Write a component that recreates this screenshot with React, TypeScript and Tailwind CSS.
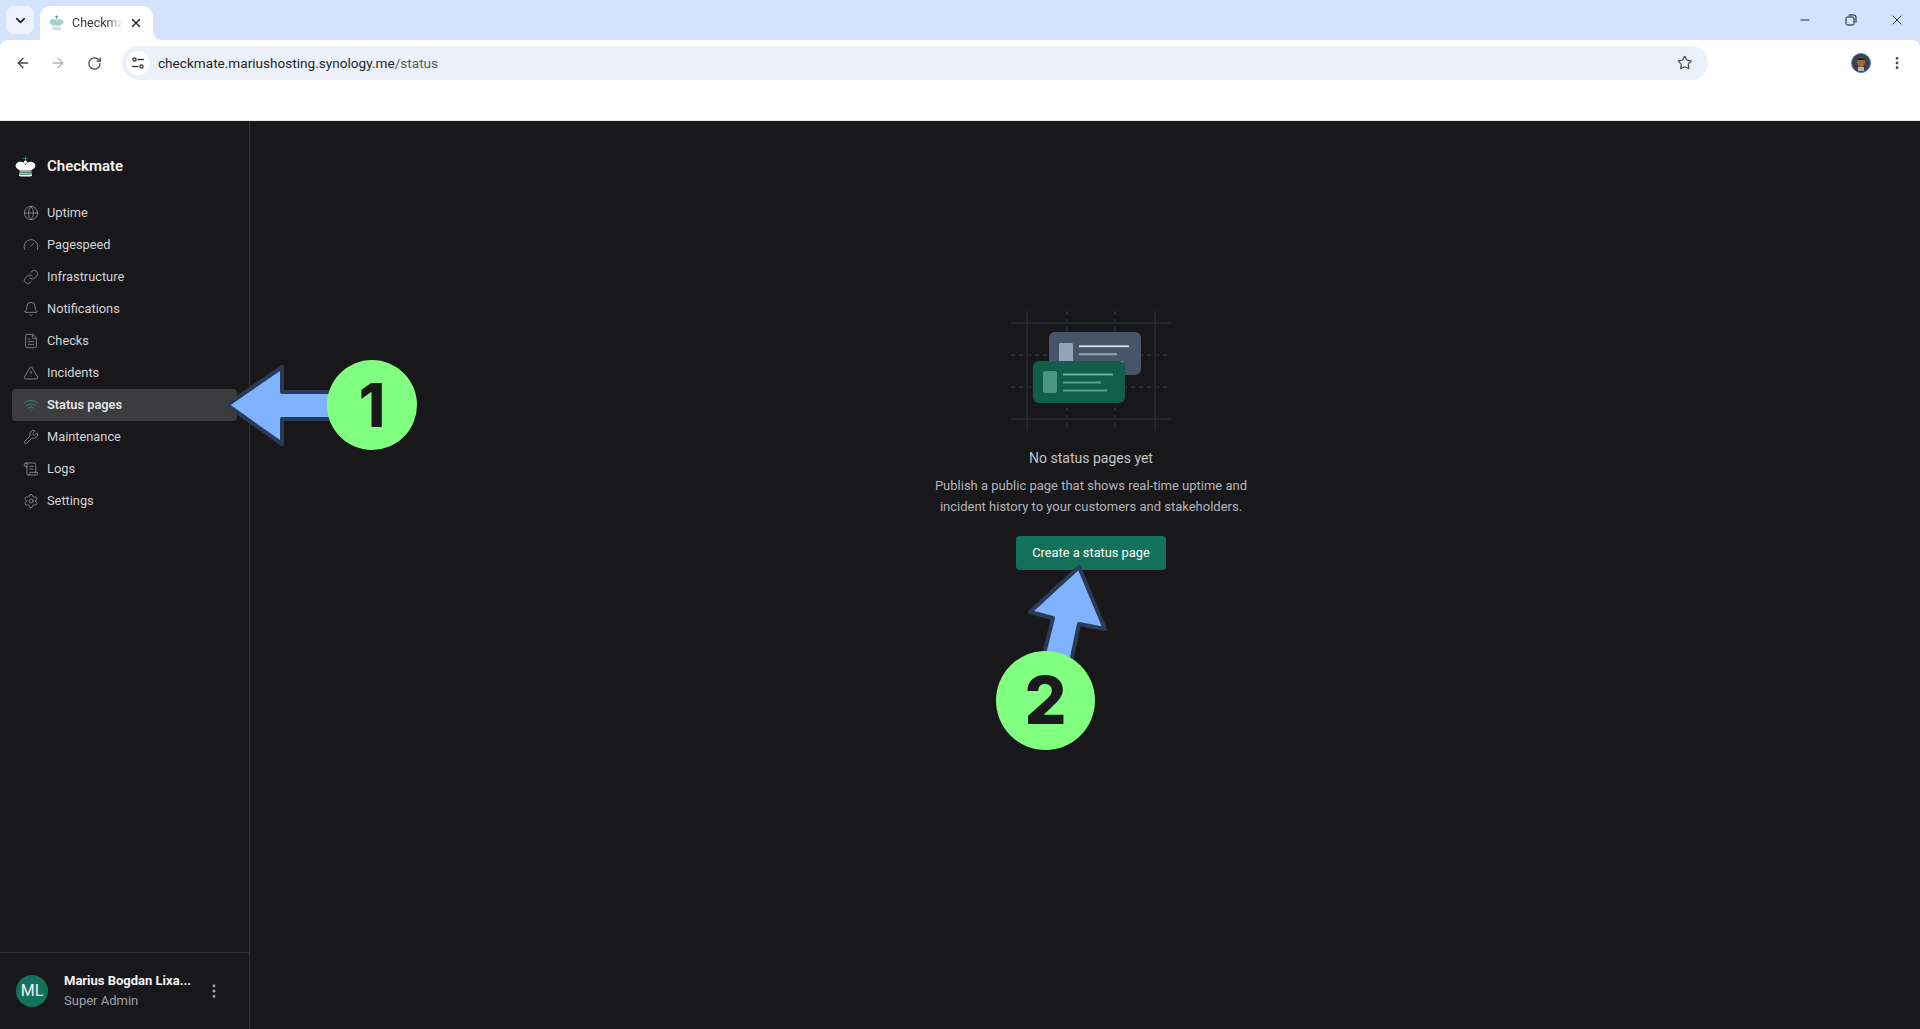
import React from "react";
import { Globe, Link, Bell, FileText, TriangleAlert, Wifi, Wrench, ScrollText, Settings, ArrowLeft, ArrowRight, RotateCw, ChevronDown, X, Star, EllipsisVertical, Minus } from "lucide-react";

const Gauge = (p: { className?: string }) => (
  <svg viewBox="0 0 24 24" fill="none" stroke="currentColor" strokeWidth={1.1} strokeLinecap="round" className={p.className}>
    <path d="M2.6 19a10.5 10.5 0 0 1 9.4-15 10.5 10.5 0 0 1 9.4 15" />
    <path d="M12 13.5l4.5-4.5" />
  </svg>
);

const Crown = ({ className, tab }: { className?: string; tab?: boolean }) => {
  const fill = tab ? "#a9d3c8" : "#ffffff";
  const line = tab ? "#ffffff" : "#13715b";
  return (
    <svg viewBox="0 0 22 22" className={className}>
      <path d="M11 0.5v5M8.6 2.6h4.8" stroke="#1b8a70" strokeWidth="1.1" fill="none" />
      <path d="M11 9.5c1-2.6 3.6-3.8 6-3.4 3 .5 4.8 2.6 4.3 4.8-.4 1.7-3 3.2-4.5 4.2H5.2C3.7 14.100 1.100 12.600.7 10.900.2 8.700 2 6.600 5 6.100c2.400-.4 5 .8 6 3.400z" fill={fill} />
      <circle cx="11" cy="6.500" r="1.700" fill={fill} />
      <path d="M5 15.400h12l.3 2H4.700z" fill={fill} />
      <path d="M4.600 18.200h12.800l.4 2.800c-1.800.8-11.800.8-13.600 0z" fill={fill} />
      <path d="M5 16.600h12M5 19.200h12" stroke={line} strokeWidth=".9" />
    </svg>
  );
};

const items = [
  { label: "Uptime", Icon: Globe },
  { label: "Pagespeed", Icon: Gauge },
  { label: "Infrastructure", Icon: Link },
  { label: "Notifications", Icon: Bell },
  { label: "Checks", Icon: FileText },
  { label: "Incidents", Icon: TriangleAlert },
  { label: "Status pages", Icon: Wifi, active: true },
  { label: "Maintenance", Icon: Wrench },
  { label: "Logs", Icon: ScrollText },
  { label: "Settings", Icon: Settings },
];

function Illustration() {
  const line = "#282c33";
  return (
    <svg width="160" height="120" viewBox="0 0 160 120" fill="none" className="block">
      <path d="M0 12H160M0 108H160M16 0V120M144 0V120" stroke={line} strokeWidth="1.5" />
      <path d="M0 44H160M0 76H160M56 0V120M104 0V120" stroke={line} strokeWidth="1.5" strokeDasharray="4 4" />
      <rect x="38" y="21" width="92" height="43" rx="6" fill="#475569" />
      <rect x="48" y="32" width="14" height="24" rx="1.5" fill="#94a3b8" />
      <path d="M68 35.2H118" stroke="#cbd5e1" strokeWidth="2" />
      <path d="M68 43.2H106" stroke="#94a3b8" strokeWidth="2" />
      <path d="M68 51.2H112" stroke="#94a3b8" strokeWidth="2" />
      <rect x="22" y="50" width="92" height="42" rx="6" fill="#115e4b" />
      <rect x="32" y="60" width="14" height="22" rx="2" fill="#4d9580" />
      <path d="M52 63.4H102" stroke="#6fae9b" strokeWidth="2" />
      <path d="M52 71.4H90" stroke="#5fa08c" strokeWidth="2" />
      <path d="M52 79.4H96" stroke="#5fa08c" strokeWidth="2" />
    </svg>
  );
}

export default function App() {
  return (
    <div className="relative h-[1029px] w-[1920px] overflow-hidden flex flex-col bg-[#18181b] font-['Roboto','Liberation_Sans',sans-serif]">
      {/* browser chrome */}
      <div className="bg-[#d3e3fd] shrink-0">
        <div className="h-10 flex items-end pl-[6px] pr-0">
          <div className="w-[28px] h-[28px] mb-[6px] rounded-lg bg-[#edf2fc] flex items-center justify-center text-[#1f1f1f]">
            <ChevronDown size={15} strokeWidth={2.6} />
          </div>
          <div className="relative ml-[6px] w-[113px] h-[34px] bg-white rounded-t-[10px] flex items-center pl-[9px] text-[#3c3c3c]">
            <Crown className="w-[15px] h-[15px] mb-[2px]" tab />
            <span className="ml-[8px] w-[50px] h-[16px] whitespace-nowrap text-[12.500px] leading-[16px] text-[#3a3a3a] [mask-image:linear-gradient(90deg,#000_70%,transparent)]">Checkma</span>
            <X size={14} strokeWidth={2.4} className="ml-[7px] text-[#222]" />
            <svg width="12" height="10" viewBox="0 0 12 10" className="absolute right-[-12px] bottom-0"><path d="M0 0v10h12C5 10 0 8 0 0z" fill="#fff" /></svg>
          </div>
          <div className="flex-1" />
          <div className="self-start h-10 flex items-center text-[#111]">
            <div className="w-[46px] flex justify-center"><Minus size={14} strokeWidth={1.5} /></div>
            <div className="w-[46px] flex justify-center">
              <svg width="12" height="12" viewBox="0 0 12 12" fill="none" stroke="currentColor" strokeWidth="1"><rect x="1" y="3" width="8" height="8" rx="1.5" /><path d="M3.500 1h5.500a2 2 0 0 1 2 2v5.500" /></svg>
            </div>
            <div className="w-[46px] flex justify-center"><X size={16} strokeWidth={1.2} /></div>
          </div>
        </div>
        <div className="bg-white rounded-t-lg h-[80px] pt-[6px] flex items-start">
          <div className="w-[122px] h-[34px] shrink-0 flex items-center pl-[15px] gap-[19px]">
            <ArrowLeft size={16} strokeWidth={2} className="text-[#474747]" />
            <ArrowRight size={16} strokeWidth={2} className="text-[#b3b3b3]" />
            <RotateCw size={15} strokeWidth={2} className="ml-[2px] text-[#474747]" />
          </div>
          <div className="w-[1586px] h-[34px] rounded-full bg-[#ebf0f9] flex items-center pl-1 pr-4">
            <div className="w-[24px] h-[24px] rounded-full bg-white flex items-center justify-center text-[#333]">
              <svg width="14" height="14" viewBox="0 0 14 14" fill="none" stroke="currentColor" strokeWidth="1.3"><circle cx="3.500" cy="3.500" r="1.600" /><path d="M6.500 3.500H13" /><circle cx="10.500" cy="10.500" r="1.600" /><path d="M1 10.500H7.500" /></svg>
            </div>
            <span className="ml-[8px] text-[13.600px] text-[#1f1f1f] whitespace-nowrap">checkmate.mariushosting.synology.me<span className="text-[#5a5a5a]">/status</span></span>
            <div className="flex-1" />
            <Star size={15.5} strokeWidth={1.8} className="text-[#474747]" />
          </div>
          <div className="flex-1 h-[34px] flex items-center">
            <div className="ml-[143px] w-[20px] h-[20px] rounded-full border-[1.5px] border-[#3b82d6] bg-[#3f3f44] overflow-hidden flex items-center justify-center">
              <svg width="14" height="16" viewBox="0 0 14 16"><ellipse cx="7" cy="7" rx="4" ry="5" fill="#9a6b42" /><path d="M3 5c1-3 7-3 8 0H3z" fill="#201a16" /><rect x="4" y="12" width="6" height="4" fill="#c9b08a" /></svg>
            </div>
            <EllipsisVertical size={16} strokeWidth={2.2} className="ml-[18px] text-[#474747]" />
          </div>
        </div>
        <div className="h-px bg-[#e3e3e3]" />
      </div>

      {/* app */}
      <div className="flex-1 flex min-h-0">
        <aside className="w-[250px] shrink-0 border-r border-[#323236] flex flex-col">
          <div className="h-[76px] shrink-0 flex items-center pl-[15px] pt-[14px]">
            <Crown className="w-[21px] h-[21px]" />
            <span className="ml-[11px] text-[15px] font-semibold text-[#f4f4f5]">Checkmate</span>
          </div>
          <nav className="px-3 flex flex-col">
            {items.map(({ label, Icon, active }) => (
              <div key={label} className={`h-8 flex items-center pl-[11px] rounded ${active ? "bg-[#3c3c3f]" : ""}`}>
                <Icon className={`w-4 h-4 [stroke-width:1.1] ${active ? "text-[#2f9e83]" : "text-[#a1a1aa]"}`} />
                <span className={`ml-[8px] text-[12.800px] ${active ? "text-[#e4e4e7] font-semibold" : "text-[#d4d4d8]"}`}>{label}</span>
              </div>
            ))}
          </nav>
          <div className="flex-1" />
          <div className="h-[77px] shrink-0 border-t border-[#323236] flex items-center pl-4">
            <div className="w-8 h-8 rounded-full bg-[#13715b] text-[#f4f4f5] text-[16px] flex items-center justify-center">ML</div>
            <div className="ml-4 w-[128px]">
              <div className="text-[13px] leading-5 font-bold text-[#f4f4f5] whitespace-nowrap">Marius Bogdan Lixa...</div>
              <div className="text-[13px] leading-5 text-[#a1a1aa]">Super Admin</div>
            </div>
            <EllipsisVertical size={18} strokeWidth={2} className="ml-[13px] text-[#a1a1aa]" />
          </div>
        </aside>
        <main className="flex-1 flex flex-col items-center pl-3 pt-[190px]">
          <Illustration />
          <h2 className="mt-[16px] text-[14px] leading-[22px] text-[#c4c4c9] font-normal">No status pages yet</h2>
          <p className="mt-[6px] w-[340px] text-center text-[13px] leading-[21px] text-[#b4b4ba]">
            Publish a public page that shows real-time uptime and incident history to your customers and stakeholders.
          </p>
          <button className="mt-[19px] w-[150px] h-[34px] rounded bg-[#13715b] text-white text-[12.800px]">Create a status page</button>
        </main>
      </div>

      {/* annotations */}
      <svg width="130" height="90" viewBox="0 0 130 90" className="absolute left-[220px] top-[360px]">
        <path d="M7 45L62 7V32H130V59H62V84z" fill="#80b3ff" stroke="#2b3a55" strokeWidth="4" strokeLinejoin="round" />
      </svg>
      <div className="absolute left-[327px] top-[360px] w-[90px] h-[90px] rounded-full bg-[#80ff80] flex items-center justify-center text-[#1a1a1d] text-[60px] font-extrabold font-['Inter',sans-serif]">1</div>
      <svg width="90" height="110" viewBox="0 0 90 110" className="absolute left-[1022px] top-[562px]">
        <path d="M57 5L83 67L57 62L48 105L20 100L31 56L8 50z" fill="#80b3ff" stroke="#2b3a55" strokeWidth="4" strokeLinejoin="round" />
      </svg>
      <div className="absolute left-[996px] top-[651px] w-[99px] h-[99px] rounded-full bg-[#80ff80] flex items-center justify-center text-[#1a1a1d] text-[66px] font-extrabold font-['Inter',sans-serif]">2</div>
    </div>
  );
}
